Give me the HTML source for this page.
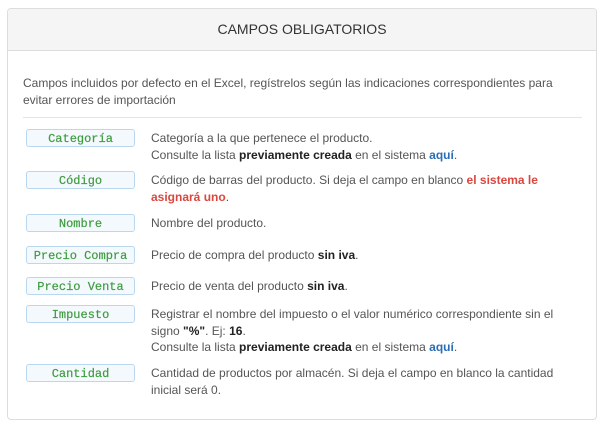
<!DOCTYPE html>
<html><head><meta charset="utf-8"><style>
body{margin:0;background:#fff;font-family:"Liberation Sans",sans-serif;}
.panel{position:absolute;left:7px;top:8px;width:590px;height:412px;border:1px solid #ddd;border-radius:4px;box-sizing:border-box;background:#fff;}
.hd{height:41px;background:#f5f5f5;border-bottom:1px solid #ddd;text-align:center;line-height:41px;font-size:14px;color:#333;border-radius:4px 4px 0 0}
.intro{position:absolute;left:15px;top:66px;width:555px;font-size:12px;line-height:17px;color:#555}
.sep{position:absolute;left:15px;right:14px;top:108px;border-top:1px solid #e5e5e5}
.row{position:absolute;left:18px;width:560px;font-size:12px;line-height:16.5px;color:#555}
.b{position:absolute;left:0;top:-1px;width:109px;height:18px;box-sizing:border-box;border:1px solid #b9d8f0;background:#f4f9fe;border-radius:3px;text-align:center;line-height:17px;padding-top:1px;font-family:"Liberation Mono",monospace;font-size:12px;color:#3e9c3e;-webkit-text-stroke:0.2px #3e9c3e}
.t{position:absolute;left:125px;width:420px}
b{color:#222}
.a{color:#2a6fb5;font-weight:bold}
.r{color:#d9473f;font-weight:bold}
</style></head><body>
<div class="panel">
<div class="hd">CAMPOS OBLIGATORIOS</div>
<div class="intro">Campos incluidos por defecto en el Excel, regístrelos según las indicaciones correspondientes para evitar errores de importación</div>
<div class="sep"></div>
<div class="row" style="top:121px"><div class="b">Categoría</div><div class="t">Categoría a la que pertenece el producto.<br>Consulte la lista <b>previamente creada</b> en el sistema <span class="a">aquí</span>.</div></div>
<div class="row" style="top:163px"><div class="b">Código</div><div class="t">Código de barras del producto. Si deja el campo en blanco <span class="r">el sistema le asignará uno</span>.</div></div>
<div class="row" style="top:206px"><div class="b">Nombre</div><div class="t">Nombre del producto.</div></div>
<div class="row" style="top:238px"><div class="b">Precio Compra</div><div class="t">Precio de compra del producto <b>sin iva</b>.</div></div>
<div class="row" style="top:269px"><div class="b">Precio Venta</div><div class="t">Precio de venta del producto <b>sin iva</b>.</div></div>
<div class="row" style="top:297px"><div class="b">Impuesto</div><div class="t">Registrar el nombre del impuesto o el valor numérico correspondiente sin el signo <b>"%"</b>. Ej: <b>16</b>.<br>Consulte la lista <b>previamente creada</b> en el sistema <span class="a">aquí</span>.</div></div>
<div class="row" style="top:356px"><div class="b">Cantidad</div><div class="t">Cantidad de productos por almacén. Si deja el campo en blanco la cantidad inicial será 0.</div></div>
</div>
</body></html>
